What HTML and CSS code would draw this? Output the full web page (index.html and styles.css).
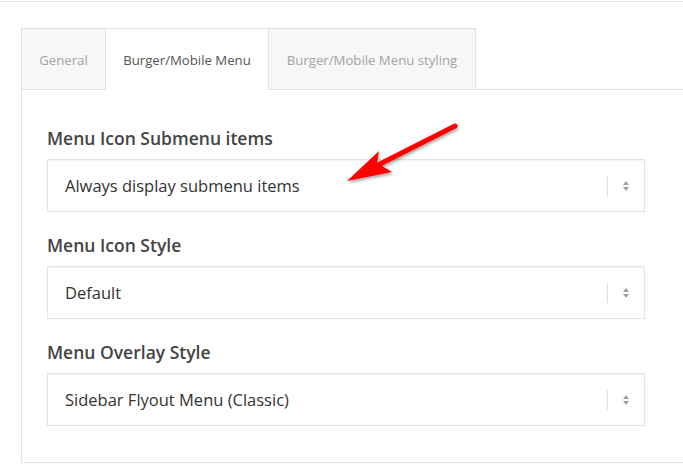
FILE: index.html
```html
<!DOCTYPE html>
<html>
<head>
<meta charset="utf-8">
<link rel="stylesheet" href="styles.css">
</head>
<body>
<div class="topline"></div>
<div class="wrap">
  <div class="tabs">
    <div class="tab tab-general">General</div>
    <div class="tab tab-active">Burger/Mobile Menu</div>
    <div class="tab tab-styling">Burger/Mobile Menu styling</div>
  </div>
  <div class="panel">
    <div class="field">
      <div class="label">Menu Icon Submenu items</div>
      <div class="select"><span class="value">Always display submenu items</span><span class="sep"></span><span class="arrows"><span class="up"></span><span class="down"></span></span></div>
    </div>
    <div class="field">
      <div class="label">Menu Icon Style</div>
      <div class="select"><span class="value">Default</span><span class="sep"></span><span class="arrows"><span class="up"></span><span class="down"></span></span></div>
    </div>
    <div class="field">
      <div class="label">Menu Overlay Style</div>
      <div class="select"><span class="value">Sidebar Flyout Menu (Classic)</span><span class="sep"></span><span class="arrows"><span class="up"></span><span class="down"></span></span></div>
    </div>
  </div>
</div>
<svg class="pointer" width="140" height="90" viewBox="330 110 140 90">
  <defs>
    <filter id="sh" x="-20%" y="-20%" width="140%" height="160%">
      <feDropShadow dx="1" dy="2" stdDeviation="1.5" flood-color="#000" flood-opacity="0.35"/>
    </filter>
  </defs>
  <g filter="url(#sh)" fill="#f00">
    <line x1="455" y1="126" x2="372" y2="168" stroke="#f00" stroke-width="5" stroke-linecap="round"/>
    <polygon points="347,181 379,151 377,163 392,172"/>
  </g>
</svg>
</body>
</html>
```
FILE: styles.css
```css
html, body {
  margin: 0;
  padding: 0;
  background: #fff;
}
body {
  font-family: "Open Sans", "Liberation Sans", sans-serif;
  position: relative;
  width: 683px;
  height: 467px;
  overflow: hidden;
}
.topline {
  margin-top: 1px;
  border-top: 1px solid #e6e6e6;
}
.wrap {
  padding: 26px 0 0 21px;
}
.tabs {
  display: flex;
  margin-bottom: -1px;
}
.tab {
  box-sizing: border-box;
  height: 62px;
  padding-top: 2px;
  border: 1px solid #e1e1e1;
  border-right: none;
  background: #f7f7f7;
  color: #a3a3a3;
  font-size: 13.2px;
  display: flex;
  align-items: center;
  justify-content: center;
}
.tab-general { width: 84px; }
.tab-active {
  width: 163px;
  background: #fff;
  color: #555;
  border-bottom-color: #fff;
  position: relative;
  z-index: 1;
}
.tab-styling {
  width: 208px;
  border-right: 1px solid #e1e1e1;
}
.panel {
  border: 1px solid #e1e1e1;
  border-right: none;
  padding: 36px 38px 36px 25px;
  display: flex;
  flex-direction: column;
  gap: 21px;
}
.label {
  font-size: 17.5px;
  font-weight: 600;
  color: #444;
  line-height: 24px;
  margin-bottom: 9px;
}
.select {
  box-sizing: border-box;
  height: 53px;
  border: 1px solid #e3e3e3;
  box-shadow: inset 0 1px 2px rgba(0,0,0,0.06);
  display: flex;
  align-items: center;
  padding: 0 0 0 17px;
}
.value {
  flex: 1;
  font-size: 16.5px;
  color: #333;
}
.sep {
  width: 1px;
  height: 20px;
  background: #e0e0e0;
  margin-right: 15px;
}
.arrows {
  display: flex;
  flex-direction: column;
  gap: 2px;
  margin-right: 15px;
}
.up, .down {
  width: 0;
  height: 0;
  border-left: 3.5px solid transparent;
  border-right: 3.5px solid transparent;
}
.up { border-bottom: 4px solid #a0a0a0; }
.down { border-top: 4px solid #a0a0a0; }
.pointer {
  position: absolute;
  left: 330px;
  top: 110px;
}
```
